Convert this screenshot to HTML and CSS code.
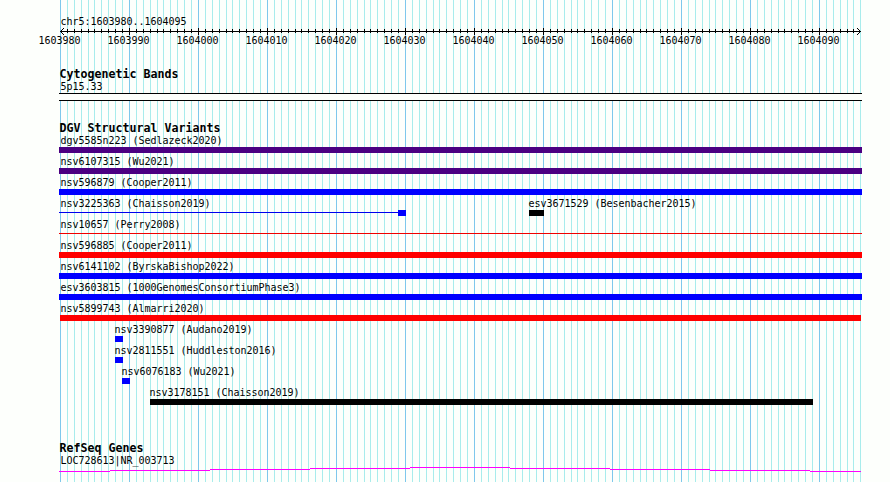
FILE: index.html
```
<!DOCTYPE html>
<html lang="en">
<head>
    <meta charset="UTF-8">
    <title>chr5:1603980..1604095</title>
    <link rel="stylesheet" href="styles.css">
</head>
<body>
<div class="panel">
    <div class="label location">chr5:1603980..1604095</div>
    <svg class="ruler" width="803" height="7" shape-rendering="crispEdges">
        <defs>
            <pattern id="ticks" x="1" y="0" width="69" height="7" patternUnits="userSpaceOnUse">
                <path d="M0 0h1v7h-1zM7 1h1v4h-1zM14 1h1v4h-1zM21 1h1v4h-1zM28 1h1v4h-1zM34 1h1v4h-1zM41 1h1v4h-1zM48 1h1v4h-1zM55 1h1v4h-1zM62 1h1v4h-1z"/>
            </pattern>
        </defs>
        <rect x="5" y="0" width="792" height="7" fill="url(#ticks)"/>
        <path d="M1 3h801v1h-801zM2 2h1v3h-1zM3 1h1v1h-1zM3 5h1v1h-1zM4 0h1v1h-1zM4 6h1v1h-1zM800 2h1v3h-1zM799 1h1v1h-1zM799 5h1v1h-1zM798 0h1v1h-1zM798 6h1v1h-1z"/>
    </svg>
    <div class="scale">
        <span>1603980</span>
        <span>1603990</span>
        <span>1604000</span>
        <span>1604010</span>
        <span>1604020</span>
        <span>1604030</span>
        <span>1604040</span>
        <span>1604050</span>
        <span>1604060</span>
        <span>1604070</span>
        <span>1604080</span>
        <span>1604090</span>
    </div>

    <div class="track">
        <h2>Cytogenetic Bands</h2>
        <div class="label">5p15.33</div>
        <div class="band"></div>
    </div>

    <div class="track">
        <h2>DGV Structural Variants</h2>
        <div class="row">
            <div class="feature full"><div class="label">dgv5585n223 (Sedlazeck2020)</div><div class="bar purple"></div></div>
        </div>
        <div class="row">
            <div class="feature full"><div class="label">nsv6107315 (Wu2021)</div><div class="bar purple"></div></div>
        </div>
        <div class="row">
            <div class="feature full"><div class="label">nsv596879 (Cooper2011)</div><div class="bar blue"></div></div>
        </div>
        <div class="row">
            <div class="feature" style="width:347px"><div class="label">nsv3225363 (Chaisson2019)</div><div class="bar thin-blue"><i></i></div></div>
            <div class="feature inner" style="width:15px;margin-left:123px"><div class="label">esv3671529 (Besenbacher2015)</div><div class="bar black"></div></div>
        </div>
        <div class="row">
            <div class="feature full"><div class="label">nsv10657 (Perry2008)</div><div class="bar thin-red"></div></div>
        </div>
        <div class="row">
            <div class="feature full"><div class="label">nsv596885 (Cooper2011)</div><div class="bar red"></div></div>
        </div>
        <div class="row">
            <div class="feature full"><div class="label">nsv6141102 (ByrskaBishop2022)</div><div class="bar blue"></div></div>
        </div>
        <div class="row">
            <div class="feature full"><div class="label">esv3603815 (1000GenomesConsortiumPhase3)</div><div class="bar blue"></div></div>
        </div>
        <div class="row">
            <div class="feature edge" style="width:801px;margin-left:1px"><div class="label">nsv5899743 (Almarri2020)</div><div class="bar red"></div></div>
        </div>
        <div class="row">
            <div class="feature inner" style="width:8px;margin-left:56px"><div class="label">nsv3390877 (Audano2019)</div><div class="bar blue"></div></div>
        </div>
        <div class="row">
            <div class="feature inner" style="width:8px;margin-left:56px"><div class="label">nsv2811551 (Huddleston2016)</div><div class="bar blue"></div></div>
        </div>
        <div class="row">
            <div class="feature inner" style="width:8px;margin-left:63px"><div class="label">nsv6076183 (Wu2021)</div><div class="bar blue"></div></div>
        </div>
        <div class="row">
            <div class="feature inner" style="width:663px;margin-left:91px"><div class="label">nsv3178151 (Chaisson2019)</div><div class="bar black"></div></div>
        </div>
    </div>

    <div class="track genes">
        <h2>RefSeq Genes</h2>
        <div class="label">LOC728613|NR_003713</div>
        <svg class="intron" width="803" height="5" shape-rendering="crispEdges">
            <path fill="#f0f" d="M0 4h51v1h-51zM51 3h100v1h-100zM151 2h100v1h-100zM251 1h100v1h-100zM351 0h100v1h-100zM451 1h100v1h-100zM551 2h100v1h-100zM651 3h100v1h-100zM751 4h51v1h-51z"/>
        </svg>
    </div>
</div>
</body>
</html>
```

FILE: styles.css
```
* {
    margin: 0;
    padding: 0;
    box-sizing: border-box;
}
body {
    background-color: #fdfffc;
    color: #000;
    overflow: hidden;
    font-family: "DejaVu Sans Mono", "Liberation Mono", monospace;
    font-size: 10px;
    letter-spacing: -0.02px;
}
/* one grid line per base, a darker one every ten bases */
.panel {
    width: 803px;
    height: 482px;
    margin-left: 59px;
    padding-top: 13px;
    background-image: linear-gradient(90deg,
        #7ec8ec 1px, transparent 1px 7px,
        #a8ecec 7px 8px, transparent 8px 14px,
        #a8ecec 14px 15px, transparent 15px 21px,
        #a8ecec 21px 22px, transparent 22px 28px,
        #a8ecec 28px 29px, transparent 29px 34px,
        #a8ecec 34px 35px, transparent 35px 41px,
        #a8ecec 41px 42px, transparent 42px 48px,
        #a8ecec 48px 49px, transparent 49px 55px,
        #a8ecec 55px 56px, transparent 56px 62px,
        #a8ecec 62px 63px, transparent 63px);
    background-size: 69px 100%;
    background-position: 1px 0;
}
.label {
    height: 15px;
    line-height: 17px;
    padding-left: 1.5px;
    white-space: nowrap;
}
.ruler, .intron {
    display: block;
}
.scale {
    display: flex;
    height: 12px;
    margin-left: -34px;
    line-height: 11px;
}
.scale span {
    flex: 0 0 69px;
    text-align: center;
}
.track {
    margin-top: 20px;
}
.genes {
    margin-top: 36px;
}
h2 {
    height: 11px;
    padding-left: 0.5px;
    font-size: 11.63px;
    line-height: 14px;
    letter-spacing: 0;
    white-space: nowrap;
}
.band {
    height: 8px;
    border-top: 1px solid #000;
    border-bottom: 1px solid #000;
    background-color: #fdfffc;
}
.row {
    display: flex;
    height: 21px;
}
.feature {
    flex: none;
}
.full {
    width: 803px;
}
.edge .label {
    padding-left: 0.5px;
}
.inner .label {
    padding-left: 0;
    margin-left: -0.5px;
}
.bar {
    height: 6px;
}
.purple {
    background-color: #4b0082;
}
.blue {
    background-color: #00f;
}
.red {
    background-color: #f00;
}
.black {
    background-color: #000;
}
.thin-blue {
    background: linear-gradient(#00e, #00e) 0 2px / 100% 1px no-repeat;
}
.thin-blue i {
    display: block;
    width: 8px;
    height: 6px;
    margin-left: auto;
    background-color: #00f;
}
.thin-red {
    background: linear-gradient(#f00000, #f00000) 0 2px / 100% 1px no-repeat;
}
```
